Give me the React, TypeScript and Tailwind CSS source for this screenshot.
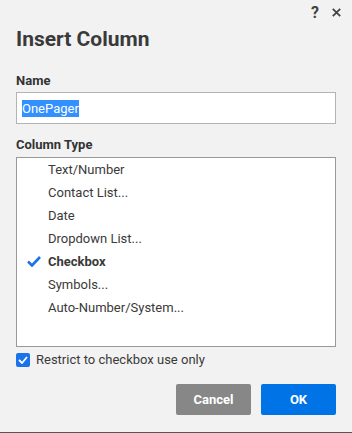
import React, { useState } from "react";

const columnTypes = [
  "Text/Number",
  "Contact List...",
  "Date",
  "Dropdown List...",
  "Checkbox",
  "Symbols...",
  "Auto-Number/System...",
];

export default function App() {
  const [selected, setSelected] = useState("Checkbox");
  const [restrict, setRestrict] = useState(true);

  return (
    <div
      className="w-[352px] h-[433px] bg-[#f2f2f2] text-[#333] border-b border-[#555] relative overflow-hidden"
      style={{ fontFamily: "Roboto, 'Liberation Sans', sans-serif" }}
    >
      {/* top icons */}
      <div className="flex justify-end items-center gap-[13px] pr-[11px] pt-[5px] h-[20px]">
        <span className="text-[16px] font-bold text-[#444] leading-none">?</span>
        <svg width="9" height="9" viewBox="0 0 9 9" className="text-[#444]">
          <path d="M0.8 0.8 L8.2 8.2 M8.2 0.8 L0.8 8.2" stroke="currentColor" strokeWidth="1.8" />
        </svg>
      </div>

      <div className="px-[16px]">
        <h1 className="text-[21px] leading-[24px] font-bold mt-[7px] text-[#3a3a3a]">
          Insert Column
        </h1>

        <label className="block text-[13px] font-bold leading-[16px] mt-[22px]">
          Name
        </label>
        <div className="mt-[3px] h-[32px] bg-white border border-[#b3b3b3] flex items-center px-[5px]">
          <span className="bg-[#3390ff] text-white text-[13px] leading-[17px]">OnePager</span>
        </div>

        <label className="block text-[13px] font-bold leading-[16px] mt-[13px]">
          Column Type
        </label>
        <div className="mt-[4px] h-[190px] bg-white border border-[#999]">
          {columnTypes.map((t) => {
            const isSel = t === selected;
            return (
              <div
                key={t}
                onClick={() => setSelected(t)}
                className="flex items-center h-[23px] cursor-default"
              >
                <div className="w-[31px] flex justify-center pl-[3px]">
                  {isSel && (
                    <svg width="14" height="11" viewBox="0 0 14 11">
                      <path
                        d="M1 5.5 L5 9.5 L13 1"
                        fill="none"
                        stroke="#1a73e8"
                        strokeWidth="2.6"
                      />
                    </svg>
                  )}
                </div>
                <span className={`text-[13px] text-[#3a3a3a] ${isSel ? "font-bold" : ""}`}>{t}</span>
              </div>
            );
          })}
        </div>

        <label
          className="flex items-center gap-[6px] mt-[3px] h-[19px] cursor-default"
          onClick={() => setRestrict(!restrict)}
        >
          <span
            className={`w-[14px] h-[14px] rounded-[2px] flex items-center justify-center ${
              restrict ? "bg-[#1a73e8]" : "bg-white border border-[#999]"
            }`}
          >
            {restrict && (
              <svg width="10" height="8" viewBox="0 0 10 8">
                <path d="M1 4 L4 7 L9 1" fill="none" stroke="white" strokeWidth="1.8" />
              </svg>
            )}
          </span>
          <span className="text-[13px] text-[#3a3a3a]">Restrict to checkbox use only</span>
        </label>

        <div className="flex justify-end gap-[10px] mt-[15px]">
          <button className="w-[75px] h-[31px] rounded-[2px] bg-[#878787] text-white text-[13px] font-bold">
            Cancel
          </button>
          <button className="w-[75px] h-[31px] rounded-[2px] bg-[#0073e6] text-white text-[13px] font-bold">
            OK
          </button>
        </div>
      </div>
    </div>
  );
}
